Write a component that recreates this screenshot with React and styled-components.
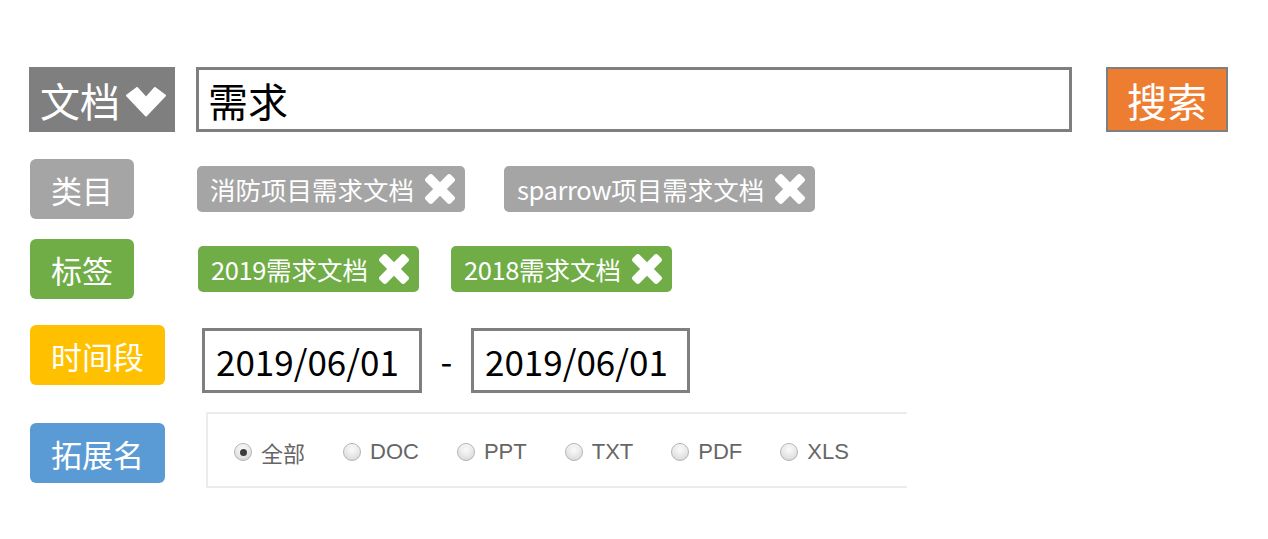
import React from "react";
import styled, { createGlobalStyle } from "styled-components";

const Global = createGlobalStyle`
  html, body { margin: 0; padding: 0; background: #ffffff; }
  body { font-family: "Noto Sans CJK SC", "Noto Sans", sans-serif; }
  * { box-sizing: border-box; }
`;

const Page = styled.div`
  padding: 67px 0 0 29px;
  display: flex;
  flex-direction: column;
  width: 1268px;
  height: 539px;
`;

const SearchRow = styled.div`
  display: flex;
  align-items: stretch;
  height: 65px;
`;

const TypeSelect = styled.div`
  width: 146px;
  background: #7f7f7f;
  color: #fff;
  display: flex;
  align-items: center;
  padding-left: 11px;
  font-size: 40px;
  line-height: 1;
`;

const Chevron = styled.svg`
  width: 40px;
  height: 30px;
  margin-left: 6px;
  margin-top: 4px;
  flex: none;
`;

const QueryBox = styled.div`
  margin-left: 21px;
  width: 876px;
  border: 3px solid #7f7f7f;
  display: flex;
  align-items: center;
  padding-left: 9px;
  font-size: 40px;
  color: #000;
  line-height: 1;
`;

const SearchButton = styled.button`
  margin-left: 34px;
  width: 122px;
  border: 2px solid #7f7f7f;
  background: #ed7d31;
  color: #fff;
  font-family: "Noto Sans CJK SC", sans-serif;
  font-size: 40px;
  line-height: 1;
  padding: 0;
  display: flex;
  align-items: center;
  justify-content: center;
`;

const Row = styled.div`
  display: flex;
  align-items: ${(p) => p.$align || "center"};
  margin-top: ${(p) => p.$mt}px;
`;

const LabelCell = styled.div`
  width: 168px;
  flex: none;
  padding-left: 1px;
  margin-top: ${(p) => p.$mt || 0}px;
`;

const Badge = styled.div`
  display: inline-flex;
  align-items: center;
  justify-content: center;
  height: 60px;
  padding: 0 21px;
  border-radius: 6px;
  background: ${(p) => p.$color};
  color: #fff;
  font-size: 31px;
  line-height: 1;
`;

const TagList = styled.div`
  display: flex;
  align-items: center;
  gap: ${(p) => p.$gap}px;
  margin-left: ${(p) => p.$ml || 0}px;
`;

const Tag = styled.div`
  display: flex;
  align-items: center;
  height: 46px;
  padding: 0 10px 0 13px;
  border-radius: 5px;
  background: ${(p) => p.$color};
  color: #fff;
  font-size: 25.5px;
  line-height: 1;
`;

const Latin = styled.span`
  letter-spacing: -0.4px;
`;

const CloseIcon = styled.svg`
  width: 30px;
  height: 30px;
  margin-left: 11px;
  flex: none;
`;

const DateGroup = styled.div`
  display: flex;
  align-items: center;
  margin-left: 5px;
  margin-top: 3px;
`;

const DateBox = styled.div`
  width: ${(p) => p.$w}px;
  height: 65px;
  border: 3px solid #7f7f7f;
  display: flex;
  align-items: center;
  padding-left: 11px;
  font-size: 35px;
  color: #000;
  line-height: 1;
`;

const Dash = styled.span`
  width: 49px;
  text-align: center;
  font-size: 34px;
  color: #000;
  line-height: 1;
`;

const RadioPanel = styled.div`
  margin-left: 9px;
  width: 701px;
  height: 76px;
  border: 2px solid #ececec;
  border-right: none;
  display: flex;
  align-items: center;
  gap: 38px;
  padding: 4px 0 0 26px;
`;

const Option = styled.label`
  display: flex;
  align-items: center;
  gap: 9px;
  font-family: "Liberation Sans", "Noto Sans CJK SC", sans-serif;
  font-size: 22px;
  color: #666;
  line-height: 1;
`;

const RadioDot = styled.span`
  width: 18px;
  height: 18px;
  border-radius: 50%;
  border: 1px solid #b3b3b3;
  background: radial-gradient(circle at 50% 35%, #fbfbfb 0%, #e4e4e4 60%, #cfcfcf 100%);
  box-shadow: inset 0 1px 1px rgba(255, 255, 255, 0.8);
  display: flex;
  align-items: center;
  justify-content: center;
  flex: none;
  &::after {
    content: "";
    width: 7px;
    height: 7px;
    border-radius: 50%;
    background: #3d3d3d;
    display: ${(p) => (p.$checked ? "block" : "none")};
  }
`;

const CjkText = styled.span`
  font-family: "Noto Sans CJK SC", sans-serif;
`;

function ChevronIcon() {
  return (
    <Chevron viewBox="0 0 40 30">
      <polygon
        points="1,8.5 11,1 20,11 29,1 39,8.5 20,28.5"
        fill="#fff"
        stroke="#fff"
        strokeWidth="2"
        strokeLinejoin="round"
      />
    </Chevron>
  );
}

function Close() {
  return (
    <CloseIcon viewBox="110 366 1188 1188">
      <path
        fill="#fff"
        d="M1298 1322q0 40-28 68l-136 136q-28 28-68 28t-68-28l-294-294-294 294q-28 28-68 28t-68-28l-136-136q-28-28-28-68t28-68l294-294-294-294q-28-28-28-68t28-68l136-136q28-28 68-28t68 28l294 294 294-294q28-28 68-28t68 28l136 136q28 28 28 68t-28 68l-294 294 294 294q28 28 28 68z"
      />
    </CloseIcon>
  );
}

const categories = [
  { latin: "", cjk: "消防项目需求文档" },
  { latin: "sparrow", cjk: "项目需求文档" },
];
const labels = [
  { latin: "2019", cjk: "需求文档" },
  { latin: "2018", cjk: "需求文档" },
];
const exts = ["全部", "DOC", "PPT", "TXT", "PDF", "XLS"];

export default function App() {
  return (
    <>
      <Global />
      <Page>
        <SearchRow>
          <TypeSelect>
            文档
            <ChevronIcon />
          </TypeSelect>
          <QueryBox>需求</QueryBox>
          <SearchButton>搜索</SearchButton>
        </SearchRow>

        <Row $mt={27}>
          <LabelCell>
            <Badge $color="#a5a5a5">类目</Badge>
          </LabelCell>
          <TagList $gap={39}>
            {categories.map((c) => (
              <Tag key={c.latin + c.cjk} $color="#a5a5a5">
                {c.latin && <Latin>{c.latin}</Latin>}
                {c.cjk}
                <Close />
              </Tag>
            ))}
          </TagList>
        </Row>

        <Row $mt={20}>
          <LabelCell>
            <Badge $color="#70ad47">标签</Badge>
          </LabelCell>
          <TagList $gap={32} $ml={1}>
            {labels.map((c) => (
              <Tag key={c.latin + c.cjk} $color="#70ad47">
                <Latin>{c.latin}</Latin>
                {c.cjk}
                <Close />
              </Tag>
            ))}
          </TagList>
        </Row>

        <Row $mt={26} $align="flex-start">
          <LabelCell>
            <Badge $color="#ffc000">时间段</Badge>
          </LabelCell>
          <DateGroup>
            <DateBox $w={220}>2019/06/01</DateBox>
            <Dash>-</Dash>
            <DateBox $w={219}>2019/06/01</DateBox>
          </DateGroup>
        </Row>

        <Row $mt={19} $align="flex-start">
          <LabelCell $mt={11}>
            <Badge $color="#5b9bd5">拓展名</Badge>
          </LabelCell>
          <RadioPanel>
            {exts.map((e, i) => (
              <Option key={e}>
                <RadioDot $checked={i === 0} />
                {i === 0 ? <CjkText>{e}</CjkText> : e}
              </Option>
            ))}
          </RadioPanel>
        </Row>
      </Page>
    </>
  );
}
